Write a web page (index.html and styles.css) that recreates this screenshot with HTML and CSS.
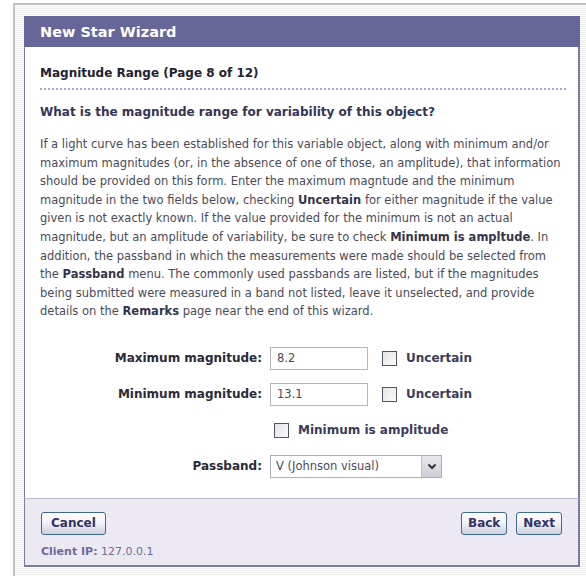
FILE: index.html
```html
<!DOCTYPE html>
<html lang="en">
<head>
<meta charset="utf-8">
<title>New Star Wizard</title>
<link rel="stylesheet" href="styles.css">
</head>
<body>
<div class="page">
  <div class="wizard">
    <div class="wizard-title">New Star Wizard</div>
    <div class="wizard-body">
      <h2 class="step-title">Magnitude Range (Page 8 of 12)</h2>
      <h3 class="question">What is the magnitude range for variability of this object?</h3>
      <p class="help">If a light curve has been established for this variable object, along with minimum and/or maximum magnitudes (or, in the absence of one of those, an amplitude), that information should be provided on this form. Enter the maximum magntude and the minimum magnitude in the two fields below, checking <b>Uncertain</b> for either magnitude if the value given is not exactly known. If the value provided for the minimum is not an actual magnitude, but an amplitude of variability, be sure to check <b>Minimum is ampltude</b>. In addition, the passband in which the measurements were made should be selected from the <b>Passband</b> menu. The commonly used passbands are listed, but if the magnitudes being submitted were measured in a band not listed, leave it unselected, and provide details on the <b>Remarks</b> page near the end of this wizard.</p>

      <div class="form">
        <label class="label">Maximum magnitude:</label>
        <div class="field">
          <span class="input">8.2</span>
          <span class="check"><span class="box"></span>Uncertain</span>
        </div>

        <label class="label">Minimum magnitude:</label>
        <div class="field">
          <span class="input">13.1</span>
          <span class="check"><span class="box"></span>Uncertain</span>
        </div>

        <span class="label"></span>
        <div class="field">
          <span class="check amp"><span class="box"></span>Minimum is amplitude</span>
        </div>

        <label class="label">Passband:</label>
        <div class="field">
          <span class="select">
            <span class="select-value">V (Johnson visual)</span>
            <span class="select-arrow">
              <svg width="10" height="7" viewBox="0 0 10 7"><path d="M1.5 1.5 L5 5 L8.5 1.5" fill="none" stroke="#333" stroke-width="2"/></svg>
            </span>
          </span>
        </div>
      </div>
    </div>
    <div class="wizard-footer">
      <div class="buttons">
        <button class="btn btn-wide">Cancel</button>
        <div class="nav">
          <button class="btn">Back</button>
          <button class="btn">Next</button>
        </div>
      </div>
      <div class="client"><b>Client IP:</b> 127.0.0.1</div>
    </div>
  </div>
</div>
</body>
</html>
```

FILE: styles.css
```css
html, body {
  margin: 0;
  padding: 0;
  background: #fff;
}

body {
  font-family: "DejaVu Sans", Verdana, sans-serif;
  font-size: 11.5px;
  color: #3c3c4c;
}

.page {
  margin: 3px 0 0 13px;
  border-top: 2px solid #bdbdbd;
  border-left: 2px solid #c4c4c4;
  padding: 11px 6px 10px 9px;
  background: repeating-linear-gradient(180deg, #ffffff 0 1px, #ececec 1px 2px);
}

.wizard {
  background: #fff;
}

.wizard-title {
  background: #666699;
  color: #fff;
  font-weight: bold;
  font-size: 14.5px;
  height: 31px;
  line-height: 32px;
  padding-left: 16px;
}

.wizard-body {
  border-left: 1px solid #7a7aa8;
  border-right: 2px solid #7a7aa8;
  padding: 18px 12px 20px 15px;
  border-bottom: 1px solid #b8b8cc;
}

.step-title {
  margin: 0;
  font-size: 12px;
  font-weight: bold;
  color: #222230;
  line-height: 16px;
  padding-bottom: 7px;
  border-bottom: 2px dotted #a8a8d0;
}

.question {
  margin: 13px 0 14px;
  font-size: 12px;
  font-weight: bold;
  color: #343456;
  line-height: 18px;
}

.help {
  margin: 0;
  line-height: 18.6px;
  color: #4a4a5a;
}

.help b {
  color: #34344c;
}

.form {
  display: grid;
  grid-template-columns: 222px auto;
  column-gap: 8px;
  row-gap: 13px;
  margin-top: 26px;
  align-items: center;
}

.label {
  text-align: right;
  font-weight: bold;
  color: #2a2a38;
  font-size: 12px;
}

.field {
  display: flex;
  align-items: center;
  min-height: 23px;
}

.input {
  box-sizing: border-box;
  width: 98px;
  height: 23px;
  border: 1px solid #b4b4c4;
  padding: 0 6px;
  line-height: 21px;
  color: #4a4a5c;
}

.check {
  display: flex;
  align-items: center;
  font-weight: bold;
  color: #3c3c5a;
  font-size: 12px;
  margin-left: 14px;
}

.check.amp {
  margin-left: 4px;
}

.box {
  box-sizing: border-box;
  width: 15px;
  height: 15px;
  border: 1px solid #4c5868;
  background: linear-gradient(135deg, #e4e4e4, #fafafa);
  margin-right: 9px;
}

.select {
  box-sizing: border-box;
  display: flex;
  width: 172px;
  height: 23px;
  border: 1px solid #a8b0c0;
}

.select-value {
  flex: 1;
  padding-left: 5px;
  line-height: 21px;
  color: #4a4a5c;
}

.select-arrow {
  box-sizing: border-box;
  width: 20px;
  border-left: 1px solid #b8bcc8;
  background: linear-gradient(180deg, #e8e8ec, #cdcdd6);
  display: flex;
  align-items: center;
  justify-content: center;
}

.wizard-footer {
  background: #ece9f3;
  border-left: 1px solid #7a7aa8;
  border-right: 2px solid #7a7aa8;
  border-bottom: 2px solid #7a7aa8;
  padding: 13px 16px 5px 16px;
}

.buttons {
  display: flex;
  justify-content: space-between;
  align-items: center;
}

.nav {
  display: flex;
  gap: 9px;
}

.btn {
  font-family: "DejaVu Sans", Verdana, sans-serif;
  font-size: 12px;
  font-weight: bold;
  color: #333366;
  height: 23px;
  padding: 0 6px;
  border: 1px solid #3e6a8c;
  border-radius: 3px;
  background: linear-gradient(180deg, #ffffff 0%, #f2f2f6 45%, #cfcfdf 100%);
}

.btn-wide {
  padding: 0 9px;
}

.client {
  margin-top: 9px;
  color: #6c6c96;
  font-size: 11px;
  line-height: 16px;
}
```
